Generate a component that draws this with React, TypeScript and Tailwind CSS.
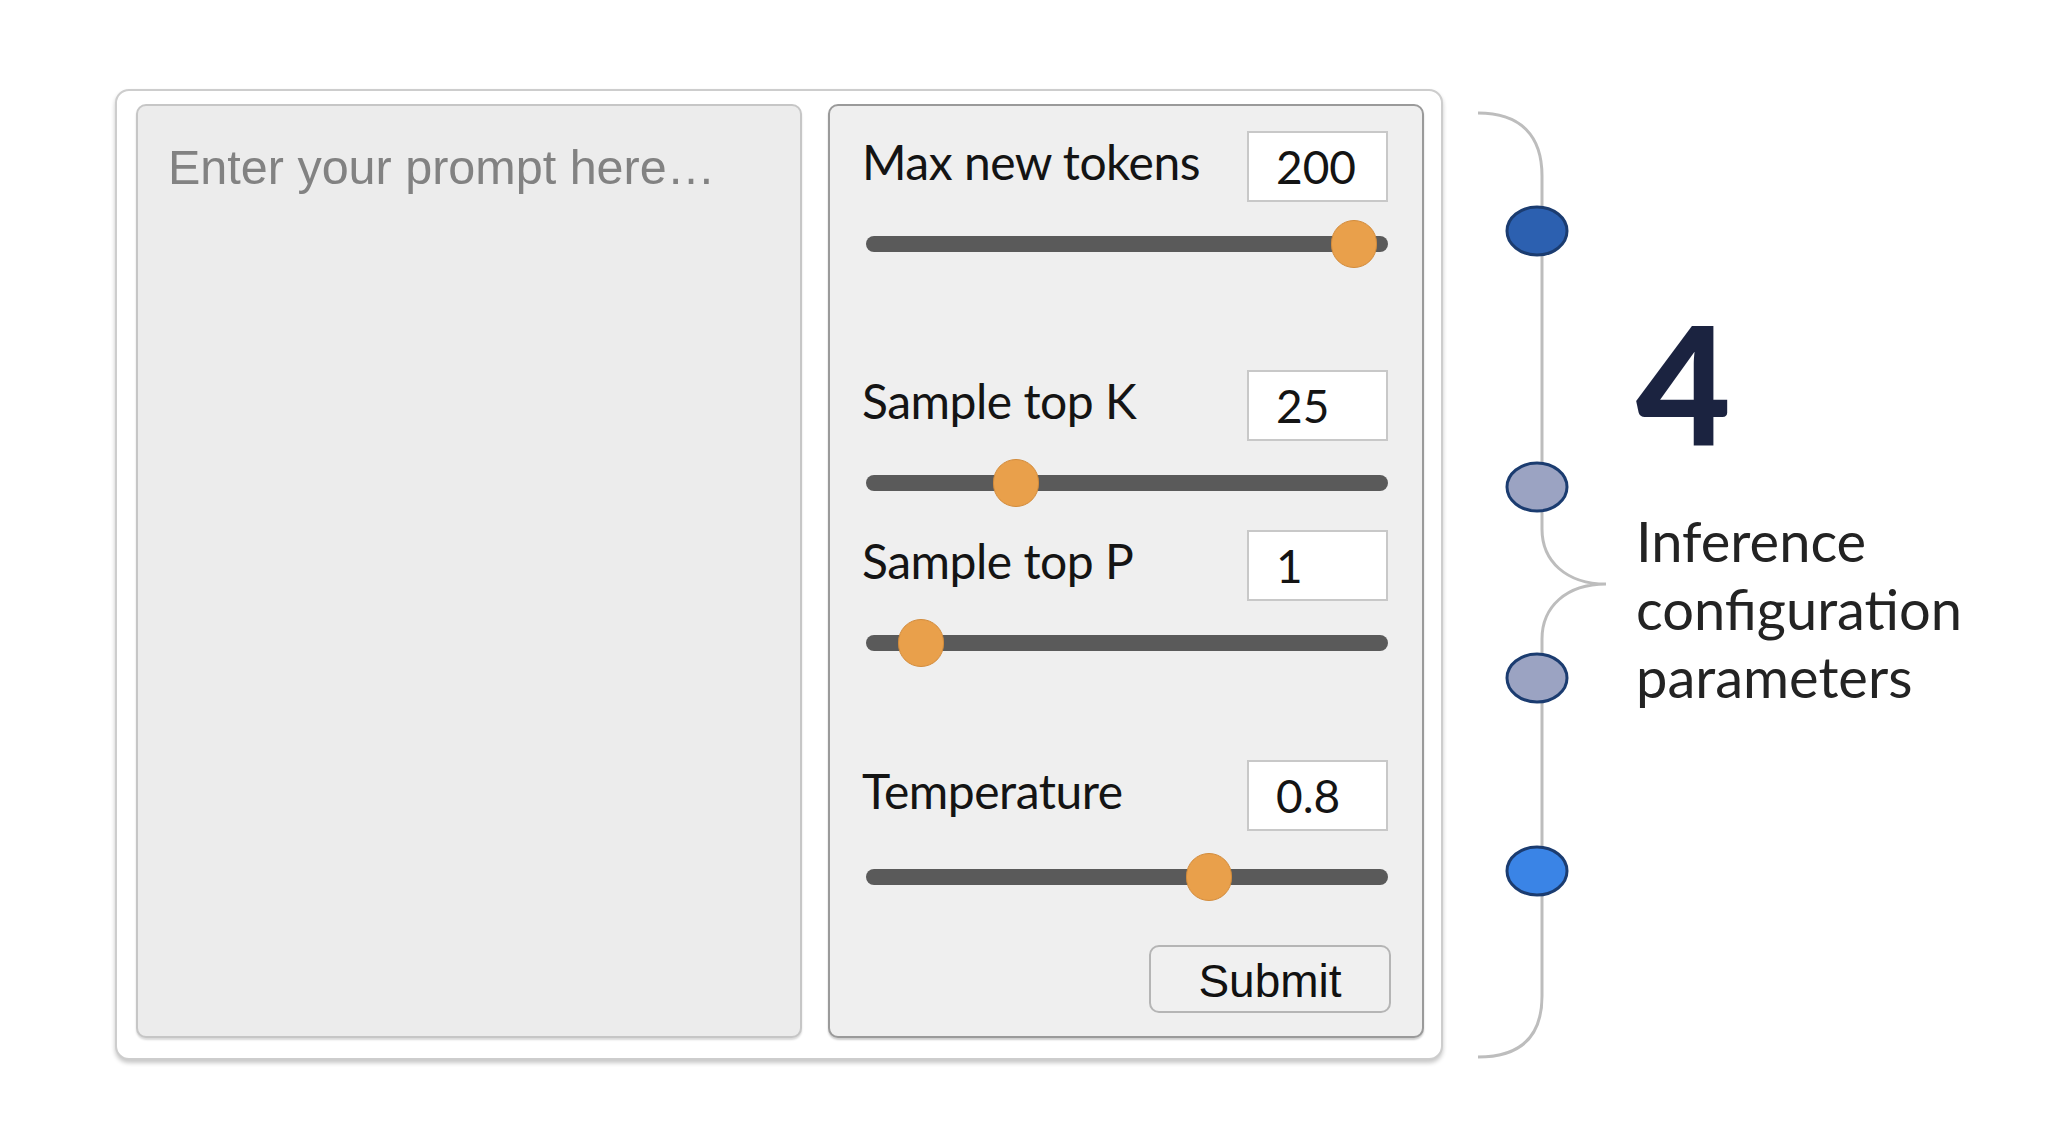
import React from "react";

const params = [
  { label: "Max new tokens", value: "200", thumb: 488, rowMt: "mt-0", sliderMt: "mt-[18px]" },
  { label: "Sample top K", value: "25", thumb: 150, rowMt: "mt-[102px]", sliderMt: "mt-[18px]" },
  { label: "Sample top P", value: "1", thumb: 55, rowMt: "mt-[23px]", sliderMt: "mt-[18px]" },
  { label: "Temperature", value: "0.8", thumb: 343, rowMt: "mt-[93px]", sliderMt: "mt-[22px]" },
];

const dots = [
  { cy: 120, fill: "#2c60b0" },
  { cy: 376, fill: "#9ba3c2" },
  { cy: 567, fill: "#9ba3c2" },
  { cy: 760, fill: "#3a84e6" },
];

function Slider({ thumb, className }: { thumb: number; className: string }) {
  return (
    <div className={`relative h-[48px] ml-[4px] flex items-center ${className}`}>
      <div className="w-full h-[16px] rounded-full bg-[#5a5a5a]" />
      {/* thumb */}
      <div
        className="absolute top-0 w-[46px] h-[48px] rounded-full bg-[#e9a04b] border border-[#d28b3b]"
        style={{ left: thumb - 23 }}
      />
    </div>
  );
}

function Brace() {
  return (
    <svg width="135" height="950" viewBox="0 0 135 950" className="ml-[33px] mt-[22px] shrink-0">
      <path
        d="M 2 2 C 45 2, 66 25, 66 65 L 66 418 C 66 450, 90 473, 130 473 C 90 473, 66 496, 66 528 L 66 885 C 66 925, 45 946, 2 946"
        fill="none"
        stroke="#bdbdbd"
        strokeWidth="3"
      />
      {dots.map((d) => (
        <ellipse key={d.cy} cx="61" cy={d.cy} rx="30" ry="24" fill={d.fill} stroke="#1b3c70" strokeWidth="3" />
      ))}
    </svg>
  );
}

export default function App() {
  return (
    <div className="w-[2048px] h-[1134px] bg-white flex items-start pl-[115px] pt-[89px]">
      {/* FRAME */}
      <div className="w-[1328px] h-[971px] shrink-0 rounded-[14px] border-2 border-[#cdcdcd] bg-white shadow-[0_3px_4px_rgba(0,0,0,0.22)] flex gap-[26px] pl-[19px] pr-[17px] pt-[13px] pb-[20px]">
        {/* PROMPT */}
        <div className="w-[666px] h-full rounded-[10px] border-2 border-[#c6c6c6] bg-[#ececec] shadow-[0_2px_2px_rgba(0,0,0,0.15)] pl-[30px] pt-[37px]">
          <div className="font-['Liberation_Sans',Arial,sans-serif] text-[48.5px] leading-none text-[#828282]">
            Enter your prompt here…
          </div>
        </div>

        {/* PARAMS */}
        <div className="w-[596px] h-full rounded-[10px] border-2 border-[#9a9a9a] bg-[#efefef] shadow-[0_2px_2px_rgba(0,0,0,0.2)] pl-[32px] pr-[34px] pt-[25px] flex flex-col font-['Lato',sans-serif]">
          {params.map((p) => (
            <div key={p.label} className="flex flex-col">
              <div className={`h-[71px] flex items-center justify-between ${p.rowMt}`}>
                <span className="mb-[10px] leading-[48px] text-[48px] text-[#141414] tracking-[-0.5px]">{p.label}</span>
                <div className="w-[141px] h-[71px] bg-white border-2 border-[#c8c8c8] flex items-center pl-[27px] text-[46px] text-[#141414]">
                  {p.value}
                </div>
              </div>
              <Slider thumb={p.thumb} className={p.sliderMt} />
            </div>
          ))}

          <button className="self-end mr-[-3px] mt-[44px] w-[242px] h-[68px] rounded-[10px] border-2 border-[#b5b5b5] bg-[#f0f0f0] font-['Liberation_Sans',Arial,sans-serif] text-[46px] text-[#111]">
            Submit
          </button>
        </div>
      </div>

      <Brace />

      {/* CAPTION */}
      <div className="ml-[25px] mt-[211px] flex flex-col font-['Lato',sans-serif]">
        <div className="text-[164px] leading-none font-black text-[#1b2340]">4</div>
        <div className="mt-[43px] text-[56px] leading-[68px] text-[#232323]">
          Inference
          <br />
          configuration
          <br />
          parameters
        </div>
      </div>
    </div>
  );
}
